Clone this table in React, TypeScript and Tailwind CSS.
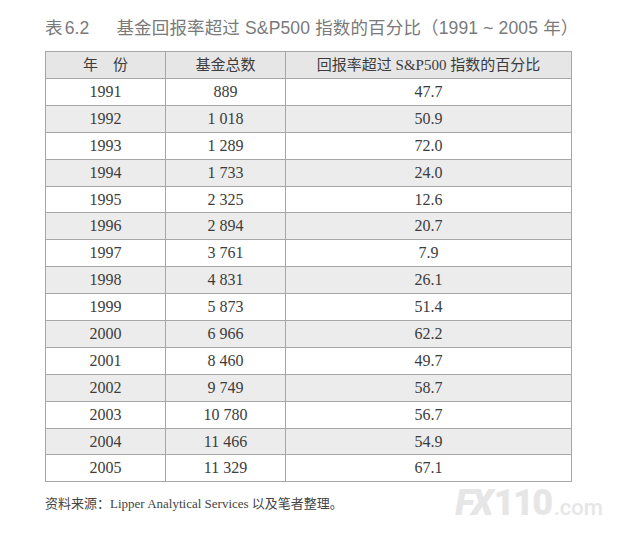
import React from 'react';

const rows: [string, string, string][] = [
  ['1991', '889', '47.7'],
  ['1992', '1 018', '50.9'],
  ['1993', '1 289', '72.0'],
  ['1994', '1 733', '24.0'],
  ['1995', '2 325', '12.6'],
  ['1996', '2 894', '20.7'],
  ['1997', '3 761', '7.9'],
  ['1998', '4 831', '26.1'],
  ['1999', '5 873', '51.4'],
  ['2000', '6 966', '62.2'],
  ['2001', '8 460', '49.7'],
  ['2002', '9 749', '58.7'],
  ['2003', '10 780', '56.7'],
  ['2004', '11 466', '54.9'],
  ['2005', '11 329', '67.1'],
];

const serif = "font-['Liberation_Serif','Noto_Sans_CJK_SC',serif]";

export default function App() {
  return (
    <div className="w-[640px] h-[551px] bg-white pl-[45px] pt-[18px] overflow-hidden">
      {/* Caption */}
      <h1 className="flex items-center h-[22px] text-[17.5px] leading-none text-[#7a7a7a] font-['Liberation_Sans','Noto_Sans_CJK_SC',sans-serif] tracking-[0.15px]">
        <span>表</span>
        <span className="ml-[2px]">6.2</span>
        <span className="ml-[27px]">基金回报率超过 S&amp;P500 指数的百分比（1991 ~ 2005 年）</span>
      </h1>

      {/* Table */}
      <table className={`mt-[11px] w-[527px] border-collapse border border-[#9a9a9a] text-[#3c3c3c] text-[16px] ${serif}`}>
        <thead>
          <tr className="h-[27px] bg-[#e6e6e6]">
            <th className="w-[120px] border border-[#a6a6a6] font-normal text-[15px]">年&nbsp;&nbsp;&nbsp;&nbsp;份</th>
            <th className="w-[120px] border border-[#a6a6a6] font-normal text-[15px]">基金总数</th>
            <th className="border border-[#a6a6a6] font-normal text-[15px]">回报率超过 S&amp;P500 指数的百分比</th>
          </tr>
        </thead>
        <tbody>
          {rows.map(([year, total, pct], i) => (
            <tr key={year} className={`h-[26.9px] ${i % 2 === 1 ? 'bg-[#ececec]' : 'bg-white'}`}>
              <td className="border border-[#a6a6a6] text-center leading-none">{year}</td>
              <td className="border border-[#a6a6a6] text-center leading-none">{total}</td>
              <td className="border border-[#a6a6a6] text-center leading-none">{pct}</td>
            </tr>
          ))}
        </tbody>
      </table>

      {/* Source + watermark */}
      <div className="flex items-center justify-between w-[558px] mt-[3px]">
        <p className={`text-[13px] text-[#444] ${serif}`}>
          资料来源：Lipper Analytical Services 以及笔者整理。
        </p>
        <div className="flex items-baseline text-[#e6e6e6] font-['Roboto','Liberation_Sans',sans-serif] select-none">
          <span className="text-[36px] font-black italic leading-none tracking-[-3px]">FX</span>
          <span className="text-[36px] font-black leading-none tracking-[-1.5px] ml-[3px]">110</span>
          <span className="text-[22px] font-medium leading-none ml-[2px]">.com</span>
        </div>
      </div>
    </div>
  );
}
